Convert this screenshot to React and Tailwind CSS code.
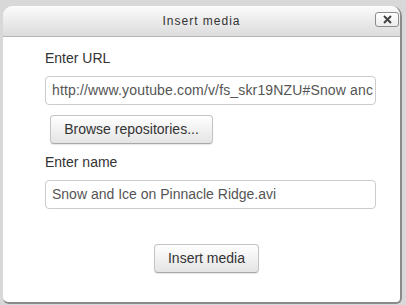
export default function App() {
  return (
    <div className="h-[305px] w-[406px] overflow-hidden bg-[#d8d8d8] pl-[3px] pt-[6px] font-['Liberation_Sans',Arial,sans-serif]">
      <div className="flex h-[298px] w-[399px] flex-col overflow-hidden rounded-t-[10px] rounded-b-[6px] border-b-2 border-r-2 border-[#8a8a8a] bg-white">
        <div className="relative flex h-[31px] shrink-0 items-center justify-center border-b border-[#b5b5b5] bg-gradient-to-b from-[#fbfbfb] to-[#dcdcdc]">
          <span className="text-[12px] tracking-[1px] text-[#333]">Insert media</span>
          <button className="absolute right-[1px] top-[6px] flex h-[15px] w-[24px] items-center justify-center rounded-[3px] border border-[#8c8c8c] bg-gradient-to-b from-white to-[#ececec]">
            <svg width="9" height="9" viewBox="0 0 9 9">
              <path d="M1 1L8 8M8 1L1 8" stroke="#444" strokeWidth="2" />
            </svg>
          </button>
        </div>
        <div className="flex flex-col px-[42px] pt-[11px] text-[14px] text-[#333]">
          <label className="leading-[20px]">Enter URL</label>
          <div className="mt-[8px] flex h-[29px] w-[331px] items-center overflow-hidden whitespace-nowrap rounded-[4px] border border-[#ccc] px-[6px] text-[#555]">
            <span className="tracking-[0.15px]">http://www.youtube.com/v/fs_skr19NZU#Snow anc</span>
          </div>
          <button className="ml-[5px] mt-[10px] h-[29px] w-[163px] rounded-[4px] border border-[#c4c4c4] border-b-[#a8a8a8] bg-gradient-to-b from-white to-[#e4e4e4] text-[14px] text-[#333] shadow-[0_1px_1px_rgba(0,0,0,0.1)]">
            Browse repositories...
          </button>
          <label className="mt-[8px] leading-[20px]">Enter name</label>
          <div className="mt-[8px] flex h-[29px] w-[331px] items-center overflow-hidden whitespace-nowrap rounded-[4px] border border-[#ccc] px-[6px] text-[#555]">
            Snow and Ice on Pinnacle Ridge.avi
          </div>
          <div className="mt-[35px] flex pl-[109px]">
            <button className="h-[29px] w-[105px] rounded-[4px] border border-[#c4c4c4] border-b-[#a8a8a8] bg-gradient-to-b from-white to-[#e4e4e4] text-[14px] text-[#333] shadow-[0_1px_1px_rgba(0,0,0,0.1)]">
              Insert media
            </button>
          </div>
        </div>
      </div>
    </div>
  );
}
